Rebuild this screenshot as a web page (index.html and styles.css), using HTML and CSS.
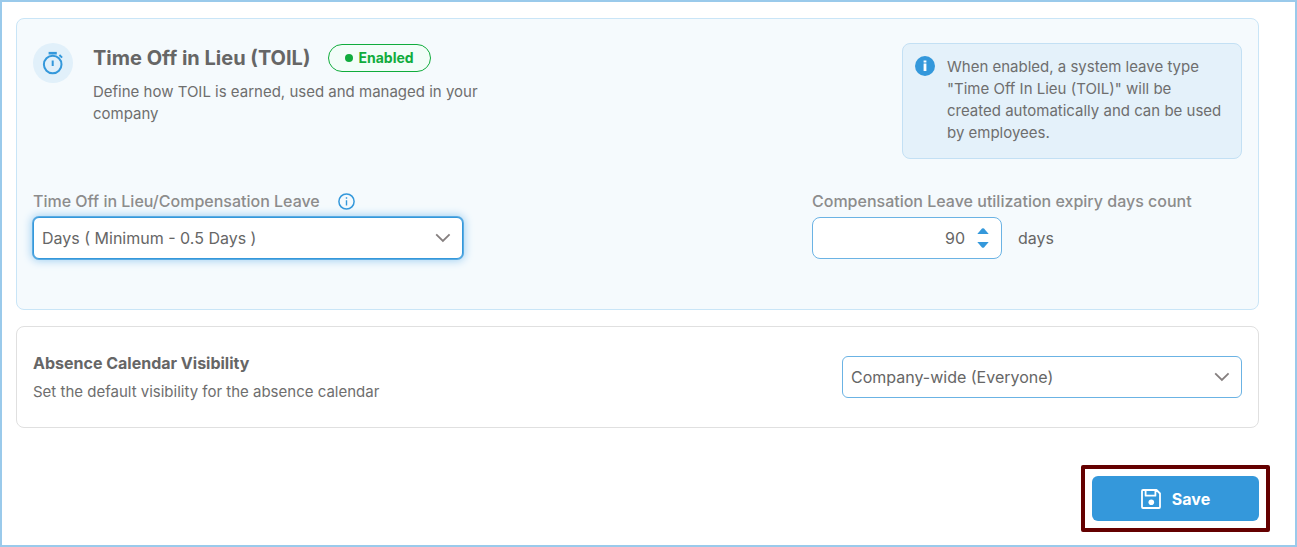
FILE: index.html
```
<!DOCTYPE html>
<html lang="en">
	<head>
		<meta charset="UTF-8">
		<title>Time Off in Lieu</title>
		<meta name="viewport" content="width=device-width, initial-scale=1">
		<link rel="stylesheet" href="styles.css">
	</head>
	<body>
		<form class="settings">
			<section class="card card-toil">
				<div class="toil-header">
					<span class="toil-icon">
						<svg width="24" height="24" viewBox="0 0 24 24" fill="none" stroke="currentColor" stroke-width="2" aria-hidden="true">
							<circle cx="11.7" cy="13.5" r="8.8"/>
							<path d="M11.7 9.5v5.500M18.4 4l2.700 2.600"/>
							<path d="M7.6 2.2h8.200" stroke-width="2.6"/>
						</svg>
					</span>
					<div class="toil-intro">
						<div class="toil-title">
							<h2>Time Off in Lieu (TOIL)</h2>
							<span class="badge">Enabled</span>
						</div>
						<p>Define how TOIL is earned, used and managed in your company</p>
					</div>
					<div class="notice">
						<svg width="20" height="20" viewBox="0 0 20 20" aria-hidden="true">
							<circle cx="10" cy="10" r="10" fill="#3498db"/>
							<path d="M10 4.6v1.9M10 7.6V15" stroke="#fff" stroke-width="2.8"/>
						</svg>
						<p>When enabled, a system leave type "Time Off In Lieu (TOIL)" will be created automatically and can be used by employees.</p>
					</div>
				</div>
				<div class="fields">
					<div class="field">
						<div class="field-label">
							<label for="toil-unit">Time Off in Lieu/Compensation Leave</label>
							<svg width="17" height="17" viewBox="0 0 17 17" fill="none" stroke="#3498db" aria-hidden="true">
								<circle cx="8.5" cy="8.5" r="7.6" stroke-width="1.5"/>
								<path d="M8.5 4.3v1.5M8.5 7.2v5.3" stroke-width="1.4"/>
							</svg>
						</div>
						<div class="select select-active">
							<select id="toil-unit">
								<option>Days ( Minimum - 0.5 Days )</option>
							</select>
							<svg width="16" height="10" viewBox="0 0 16 10" fill="none" stroke="currentColor" stroke-width="1.8" aria-hidden="true">
								<path d="M1.2 1.4 7.900 8l6.700-6.600"/>
							</svg>
						</div>
					</div>
					<div class="field">
						<div class="field-label">
							<label for="expiry">Compensation Leave utilization expiry days count</label>
						</div>
						<div class="expiry">
							<div class="stepper">
								<input type="text" inputmode="numeric" id="expiry" value="90">
								<div class="stepper-buttons">
									<button type="button" aria-label="Increase">
										<svg width="12" height="6" viewBox="0 0 12 6"><path d="M.3 6 5 .6q1-.9 2 0L11.700 6z" fill="#3498db"/></svg>
									</button>
									<button type="button" aria-label="Decrease">
										<svg width="12" height="6" viewBox="0 0 12 6"><path d="M.3 0 5 5.400q1 .9 2 0L11.700 0z" fill="#3498db"/></svg>
									</button>
								</div>
							</div>
							<span>days</span>
						</div>
					</div>
				</div>
			</section>

			<section class="card card-calendar">
				<div class="calendar-text">
					<label for="visibility">Absence Calendar Visibility</label>
					<p>Set the default visibility for the absence calendar</p>
				</div>
				<div class="select select-visibility">
					<select id="visibility">
						<option>Company-wide (Everyone)</option>
					</select>
					<svg width="16" height="10" viewBox="0 0 16 10" fill="none" stroke="currentColor" stroke-width="1.8" aria-hidden="true">
						<path d="M1.2 1.4 7.900 8l6.700-6.600"/>
					</svg>
				</div>
			</section>

			<div class="actions">
				<div class="highlight">
					<button type="button" class="save">
						<svg width="20" height="20" viewBox="0 0 20 20" fill="none" stroke="currentColor" stroke-width="1.8" stroke-linejoin="round" aria-hidden="true">
							<path d="M2 1h13.500L19 4.500V18q0 1-1 1H2q-1 0-1-1V2q0-1 1-1zM4.600 1v5.700h9.800V1"/>
							<circle cx="10.3" cy="13.3" r="2.8" fill="currentColor" stroke="none"/>
						</svg>
						Save
					</button>
				</div>
			</div>
		</form>
	</body>
</html>
```
FILE: styles.css
```
* {
	box-sizing: border-box;
}
body {
	margin: 0;
	min-height: 100vh;
	border: 2px solid #9acaeb;
	background: #fff;
	color: #666;
	font: 16px/24px Inter, "Liberation Sans", sans-serif;
}
h2, p {
	margin: 0;
}
p {
	color: #6e6e6e;
	font-size: 15px;
	line-height: 22px;
}
svg {
	display: block;
	flex: none;
}
input, select, button {
	margin: 0;
	padding: 0;
	border: 0;
	background: none;
	color: inherit;
	font: inherit;
}
.settings {
	display: flex;
	flex-direction: column;
	gap: 16px;
	padding: 16px 25px 12px 14px;
}
.card {
	margin-right: 11px;
	border: 1px solid #e0e0e0;
	border-radius: 8px;
}
.card-toil {
	padding: 24px 16px 50px;
	border-color: #c9e5f7;
	background: #f5fafd;
}
.toil-header {
	display: flex;
	align-items: flex-start;
}
.toil-icon {
	display: grid;
	place-items: center;
	flex: none;
	width: 40px;
	height: 40px;
	margin-right: 20px;
	border-radius: 50%;
	background: #e1f0fa;
	color: #3498db;
}
.toil-intro {
	flex: 0 1 420px;
}
.toil-title {
	display: flex;
	align-items: center;
	gap: 18px;
	margin-bottom: 8px;
}
h2 {
	font-size: 20px;
	font-weight: 700;
	line-height: 30px;
}
.badge {
	display: flex;
	align-items: center;
	gap: 5px;
	height: 28px;
	padding: 0 16px;
	border: 1px solid #10ac3c;
	border-radius: 14px;
	background: #f2fdf8;
	color: #10ac3c;
	font-size: 14px;
	font-weight: 700;
}
.badge::before {
	content: "";
	width: 8px;
	height: 8px;
	border-radius: 50%;
	background: currentColor;
}
.notice {
	display: flex;
	gap: 12px;
	width: 340px;
	margin-left: auto;
	padding: 12px 12px 14px;
	border: 1px solid #c3e0f4;
	border-radius: 8px;
	background: #e4f1fa;
}
.fields {
	display: flex;
	justify-content: space-between;
	gap: 32px;
	margin-top: 30px;
}
.field {
	flex: 0 1 430px;
}
.field-label {
	display: flex;
	align-items: center;
	gap: 18px;
	margin-bottom: 4px;
	color: #8c8c8c;
	font-weight: 500;
}
.select {
	display: grid;
	align-items: center;
	height: 42px;
	border: 1px solid #6bb3e4;
	border-radius: 6px;
	background: #fff;
}
.select select {
	grid-area: 1 / 1;
	width: 100%;
	height: 40px;
	padding: 0 40px 0 8px;
	appearance: none;
	outline: 0;
}
.select svg {
	grid-area: 1 / 1;
	justify-self: end;
	margin-right: 11px;
	color: #857f7f;
	pointer-events: none;
}
.select-active {
	border-color: #3498db;
	box-shadow: 0 0 0 1px #5aabe2, 0 0 8px 2px #a5d2f2;
}
.select-visibility {
	width: 400px;
}
.expiry {
	display: flex;
	align-items: center;
	gap: 16px;
}
.stepper {
	display: flex;
	align-items: center;
	gap: 12px;
	width: 190px;
	height: 42px;
	padding-right: 12px;
	border: 1px solid #6bb3e4;
	border-radius: 8px;
	background: #fff;
}
.stepper input {
	flex: 1;
	min-width: 0;
	height: 40px;
	border-radius: 8px;
	outline: 0;
	text-align: right;
}
.stepper-buttons {
	display: grid;
	gap: 8px;
}
.card-calendar {
	display: flex;
	align-items: center;
	justify-content: space-between;
	gap: 32px;
	padding: 24px 16px;
}
.calendar-text {
	display: grid;
	gap: 6px;
}
.calendar-text label {
	font-weight: 700;
}
.actions {
	display: flex;
	justify-content: flex-end;
	margin-top: 21px;
}
.highlight {
	padding: 7px;
	border: 4px solid #640000;
	border-radius: 2px;
}
.save {
	display: flex;
	align-items: center;
	justify-content: center;
	gap: 11px;
	width: 167px;
	height: 45px;
	border-radius: 6px;
	background: #3498db;
	color: #fff;
	font-weight: 700;
	cursor: pointer;
}
```
